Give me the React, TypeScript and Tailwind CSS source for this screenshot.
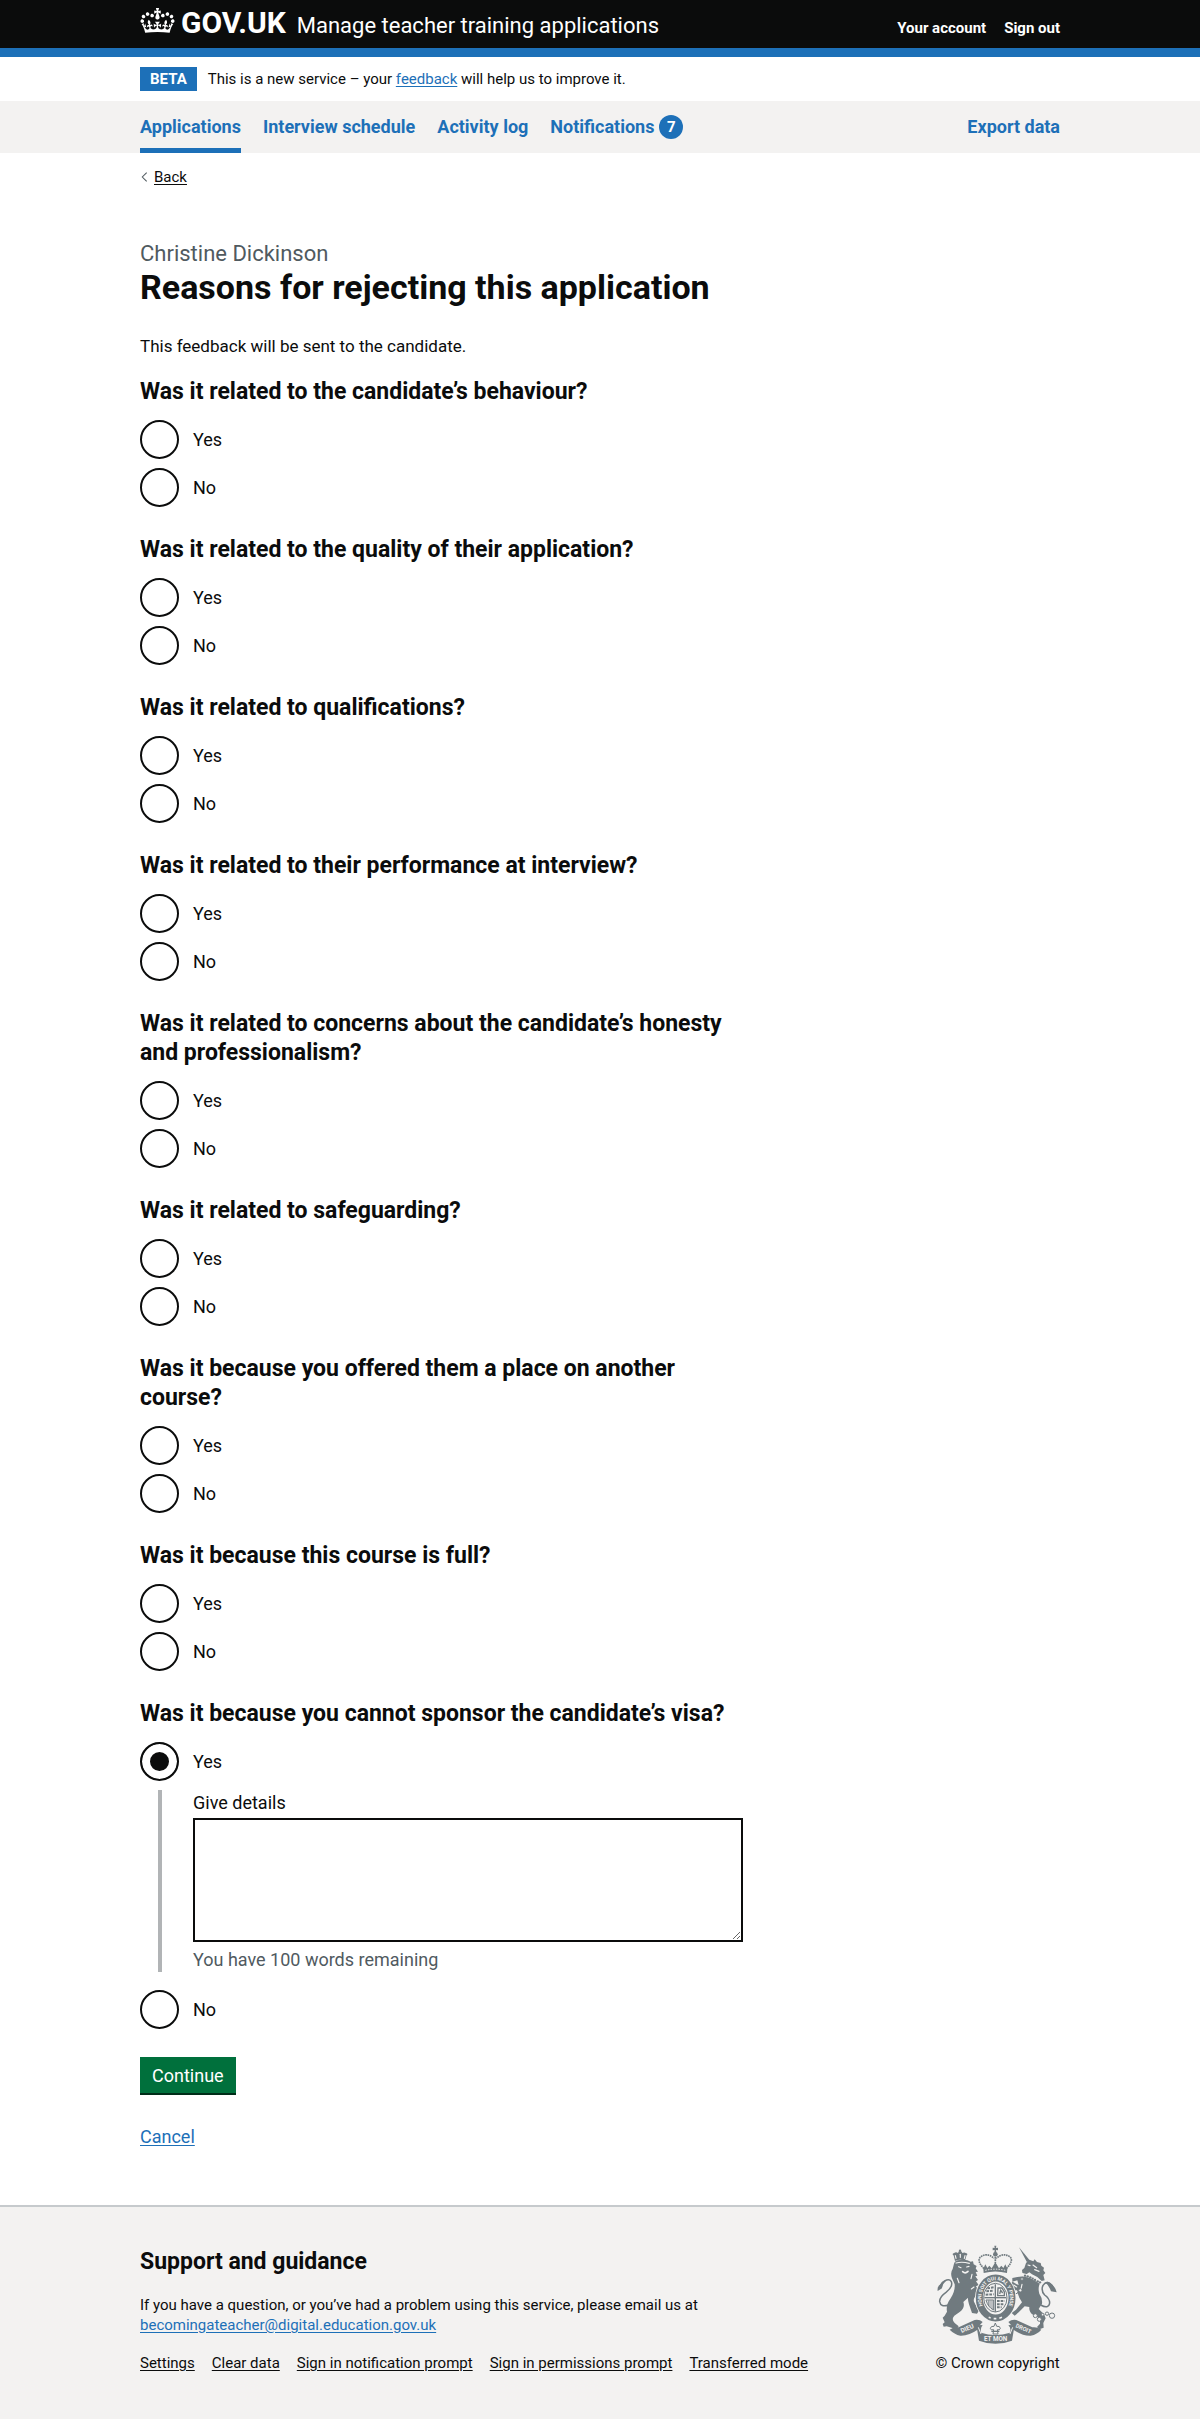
import React, { useState } from 'react';

type Answer = 'yes' | 'no' | null;

const questions: { id: string; text: string; details?: boolean; initial?: Answer }[] = [
  { id: 'behaviour', text: 'Was it related to the candidate’s behaviour?' },
  { id: 'quality', text: 'Was it related to the quality of their application?' },
  { id: 'qualifications', text: 'Was it related to qualifications?' },
  { id: 'interview', text: 'Was it related to their performance at interview?' },
  { id: 'honesty', text: 'Was it related to concerns about the candidate’s honesty and professionalism?' },
  { id: 'safeguarding', text: 'Was it related to safeguarding?' },
  { id: 'other-course', text: 'Was it because you offered them a place on another course?' },
  { id: 'full', text: 'Was it because this course is full?' },
  { id: 'visa', text: 'Was it because you cannot sponsor the candidate’s visa?', details: true, initial: 'yes' },
];

const footerLinks = ['Settings', 'Clear data', 'Sign in notification prompt', 'Sign in permissions prompt', 'Transferred mode'];

const container = 'mx-auto w-full max-w-[920px]';

function Crown() {
  return (
    <svg aria-hidden="true" viewBox="0 0 132 97" className="h-[25px] w-[35px] shrink-0">
      <path
        fill="currentColor"
        fillRule="evenodd"
        d="M25 30.2c3.5 1.5 7.7-.2 9.1-3.7 1.5-3.6-.2-7.8-3.9-9.2-3.6-1.4-7.6.3-9.1 3.9-1.4 3.5.3 7.5 3.9 9zM9 39.5c3.6 1.5 7.8-.2 9.2-3.7 1.5-3.6-.2-7.8-3.9-9.1-3.6-1.5-7.6.2-9.1 3.8-1.4 3.5.3 7.5 3.8 9zM4.4 57.2c3.5 1.5 7.7-.2 9.1-3.8 1.5-3.6-.2-7.7-3.9-9.1-3.5-1.5-7.6.3-9.1 3.8-1.4 3.5.3 7.6 3.9 9.1zm38.3-21.4c3.5 1.5 7.7-.2 9.1-3.8 1.5-3.6-.2-7.7-3.9-9.1-3.6-1.5-7.6.3-9.1 3.8-1.3 3.6.4 7.7 3.9 9.1zm64.4-5.6c-3.6 1.5-7.8-.2-9.1-3.7-1.5-3.6.2-7.8 3.8-9.2 3.6-1.4 7.7.3 9.2 3.9 1.3 3.5-.4 7.5-3.9 9zm15.9 9.3c-3.6 1.5-7.7-.2-9.1-3.7-1.5-3.6.2-7.8 3.7-9.1 3.6-1.5 7.7.2 9.2 3.8 1.5 3.5-.3 7.5-3.8 9zm4.7 17.7c-3.6 1.5-7.8-.2-9.2-3.8-1.5-3.6.2-7.7 3.9-9.1 3.6-1.5 7.7.3 9.2 3.8 1.3 3.5-.4 7.6-3.9 9.1zM89.3 35.8c-3.6 1.5-7.8-.2-9.2-3.8-1.4-3.6.2-7.7 3.9-9.1 3.6-1.5 7.7.3 9.2 3.8 1.4 3.6-.3 7.7-3.9 9.1zM69.7 17.7l8.9 4.7V9.3l-8.9 2.8c-.2-.3-.5-.6-.9-.9L72.4 0H59.6l3.5 11.2c-.3.3-.6.5-.9.9l-8.8-2.8v13.1l8.8-4.7c.3.3.6.7.9.9l-5 15.4v.1c-.2.8-.4 1.6-.4 2.4 0 4.1 3.1 7.5 7 8.1h.2c.3 0 .7.1 1 .1.4 0 .7 0 1-.1h.2c4-.6 7.1-4.1 7.1-8.1 0-.8-.1-1.7-.4-2.4V34l-5.1-15.4c.4-.2.7-.6 1-.9zM66 92.8c16.9 0 32.8 1.1 47.1 3.2 4-16.9 8.9-26.7 14-33.5l-9.6-3.4c1 4.9 1.1 7.2 0 10.2-1.5-1.4-3-4.3-4.2-8.7L108.6 76c2.8-2 5-3.2 7.5-3.3-4.4 9.4-10 11.9-13.6 11.2-4.3-.8-6.3-4.6-5.6-7.9 1-4.7 5.7-5.9 8-.5 4.3-8.7-3-11.4-7.6-8.8 7.1-7.2 7.9-13.5 2.1-21.1-8 6.1-8.1 12.3-4.5 20.8-4.7-5.4-12.1-2.5-9.5 6.2 3.4-5.2 7.9-2 7.2 3.1-.6 4.3-6.4 7.8-13.5 7.2-10.3-.9-10.9-8-11.2-13.8 2.5-.5 7.1 1.8 11 7.3L80.2 60c-4.1 4.4-8 5.3-12.3 5.4 1.4-4.4 8-11.6 8-11.6H55.5s6.4 7.2 7.9 11.6c-4.2-.1-8-1-12.3-5.4l1.4 16.4c3.9-5.5 8.5-7.7 10.9-7.3-.3 5.8-.9 12.8-11.1 13.8-7.2.6-12.9-2.9-13.5-7.2-.7-5 3.8-8.3 7.1-3.1 2.7-8.7-4.6-11.6-9.4-6.2 3.7-8.5 3.6-14.7-4.6-20.8-5.8 7.6-5 13.9 2.2 21.1-4.7-2.6-11.9.1-7.7 8.8 2.3-5.5 7.1-4.2 8.1.5.7 3.3-1.3 7.1-5.7 7.9-3.5.7-9-1.8-13.5-11.2 2.5.1 4.7 1.3 7.5 3.3l-4.7-15.4c-1.2 4.4-2.7 7.2-4.3 8.7-1.1-3-.9-5.3 0-10.2l-9.5 3.4c5 6.9 9.9 16.7 14 33.5 14.8-2.1 30.8-3.2 47.7-3.2z"
      />
    </svg>
  );
}

function RoyalArms() {
  const ink = '#707a7f';
  const paper = '#f3f2f1';
  return (
    <svg aria-hidden="true" viewBox="105 129 375 306" className="h-[102px] w-[125px]" fontFamily="Roboto, sans-serif" fontWeight="700">
      {/* Lion: crown, head and mane, body, legs, tail */}
      <g fill={ink}>
        <path d="M165 180 L160 160 Q165 150 174 156 Q175 150 180 150 Q186 150 187 156 Q197 151 200 161 L195 180 Q180 173 165 180z" />
        <circle cx="180" cy="149" r="3.5" />
        <circle cx="161" cy="160" r="3" />
        <circle cx="199" cy="160" r="3" />
        <path d="M162 188 Q164 178 180 177 Q200 174 212 182 L219 181 L221 190 L230 195 L227 202 L234 212 L227 213 L232 224 L226 226 L234 237 L228 241 L236 252 L228 256 L237 270 L228 284 Q219 292 222 302 L236 330 L231 338 L216 336 L207 310 Q203 296 204 290 L190 303 Q196 320 180 332 L163 344 Q153 354 164 366 L176 376 L170 384 L157 381 L140 376 L131 377 L128 369 L134 364 L128 350 L134 344 L141 332 Q137 312 152 292 Q166 270 164 250 L156 232 Q150 215 158 204z" />
        <path d="M232 262 L246 258 L254 264 L249 274 L236 278z" />
      </g>
      <g fill="none" stroke={paper} strokeWidth="3.5" strokeLinecap="round">
        <path d="M168 186 Q186 181 208 187" />
        <path d="M176 197 L183 200" />
        <path d="M200 198 L207 196" />
        <path d="M188 212 Q196 219 204 211" strokeWidth="5" />
        <path d="M216 220 L213 233" />
        <path d="M172 232 L177 245" />
        <path d="M222 258 L214 264" />
        <path d="M166 164 L168 172" />
        <path d="M181 160 L181 169" />
        <path d="M195 164 L193 172" />
      </g>
      <path d="M146 312 Q122 320 119 302 Q118 288 138 274 Q160 257 154 242 Q148 232 134 240 Q122 247 119 262" fill="none" stroke={ink} strokeWidth="4.5" />
      <path d="M113 270 Q111 255 122 249 Q126 240 139 238 Q127 249 126 262z" fill={ink} />

      {/* Unicorn: horn, head, body, legs, tail */}
      <g fill={ink}>
        <path d="M357 139 L389 178 L381 184z" />
        <path d="M378 186 L388 176 L400 181 L404 175 L411 183 L422 186 L424 194 L432 200 L430 208 L436 216 L430 222 L434 238 L425 240 L412 228 L396 220 L388 214 L377 221 L367 215 L366 207 L373 201z" />
        <path d="M372 226 L392 228 L420 246 Q413 262 418 278 Q428 292 426 308 L416 324 L432 340 L437 352 L430 366 L431 380 L418 385 L411 378 L420 368 L420 352 L400 342 Q386 334 388 318 L374 316 L356 334 L344 344 L335 336 L348 326 L366 304 L358 290 L350 268 L336 262 L330 250 L338 242 L350 250 L356 252 L352 238 L337 242 L337 231 L352 228z" />
      </g>
      <g fill="none" stroke={paper} strokeWidth="3.5" strokeLinecap="round">
        <path d="M384 192 L390 194" />
        <path d="M399 192 L410 200 M404 206 L417 211" />
        <path d="M372 222 L392 227 L422 244" strokeWidth="9" />
        <path d="M366 250 L362 268" />
        <path d="M341 252 L350 258" />
      </g>
      <g fill={ink}>
        {[[375, 224], [383, 226], [391, 229], [398, 233], [405, 237], [413, 241], [420, 244]].map(([x, y]) => (
          <circle key={x} cx={x} cy={y} r="3.5" />
        ))}
      </g>
      <path d="M422 312 Q446 325 449 306 Q449 292 434 282 Q422 269 429 253 Q438 240 450 248 Q459 254 461 264" fill="none" stroke={ink} strokeWidth="4.5" />
      <path d="M470 274 Q466 256 450 245 Q442 240 435 244 Q447 254 453 271z" fill={ink} />
      <g fill={paper} stroke={ink} strokeWidth="3">
        <circle cx="406" cy="344" r="6" />
        <circle cx="418" cy="355" r="6" />
        <circle cx="441" cy="338" r="5" />
        <circle cx="456" cy="344" r="8" />
        <circle cx="428" cy="341" r="4" />
        <circle cx="366" cy="234" r="4" />
        <circle cx="348" cy="272" r="6" />
        <circle cx="361" cy="268" r="5" />
      </g>

      {/* Imperial crown */}
      <g fill="none" stroke={ink} strokeWidth="5">
        <path d="M252 203 Q228 178 243 167 Q262 154 282 172" strokeDasharray="5 2" />
        <path d="M319 203 Q343 178 329 167 Q309 154 289 172" strokeDasharray="5 2" />
        <path d="M286 168 V204" strokeDasharray="5 2" />
      </g>
      <g fill={ink}>
        <circle cx="286" cy="160" r="7" />
        <path d="M283 155 L284 147 L278 148 V140 L284 141 L283 134 H289 L288 141 L294 140 V148 L288 147 L289 155z" />
        <path d="M250 203 L256 190 L262 201 L268 194 L275 202 L286 184 L297 202 L304 194 L310 201 L316 190 L322 203 L321 216 Q286 207 251 216z" />
      </g>
      <path d="M256 208 Q286 201 316 208" fill="none" stroke={paper} strokeWidth="3" strokeDasharray="4 4" />

      {/* Garter ring with its motto */}
      <ellipse cx="287" cy="291" rx="62" ry="73" fill={paper} />
      <ellipse cx="287" cy="291" rx="49" ry="60" fill="none" stroke={ink} strokeWidth="21" />
      <path id="garter-motto" d="M257 330 A43 54 0 1 1 317 330" fill="none" />
      <text fill={paper} fontSize="15" textAnchor="middle">
        <textPath href="#garter-motto" startOffset="50%">HONI SOIT QUI MAL Y PENSE</textPath>
      </text>
      <path d="M266 349 L272 351 M281 353 L289 353 M298 352 L306 349" stroke={paper} strokeWidth="5" />

      {/* Quartered shield */}
      <ellipse cx="286" cy="290" rx="35" ry="43" fill={paper} stroke={ink} strokeWidth="3" />
      <path d="M286 250 V332" stroke={ink} strokeWidth="4" />
      <path d="M253 290 H319" stroke={ink} strokeWidth="4" />
      <g stroke={ink} strokeWidth="6" fill="none">
        <path d="M262 262 L281 259 M259 271 L281 269 M257 281 L281 280" strokeDasharray="8 3" />
        <path d="M291 300 H314 M291 310 H311 M291 319 H305" strokeDasharray="8 3" />
        <path d="M294 261 H306 L313 273 V284 H293z" strokeWidth="4" />
        <path d="M299 279 L302 268 L308 276" strokeWidth="4" />
      </g>
      <path d="M258 297 H281 V327 Q264 319 258 297z" fill="none" stroke={ink} strokeWidth="3" />
      <path d="M265 298 V312 M270 298 V319 M276 298 V324" stroke={ink} strokeWidth="2.5" />

      {/* Compartment, fleur and ribbon */}
      <path d="M286 366 L290 376 Q300 374 301 382 Q299 389 292 386 L294 399 H279 L281 386 Q272 389 271 382 Q273 374 282 376z" fill={paper} stroke={ink} strokeWidth="3" />
      <path d="M274 391 H298" stroke={ink} strokeWidth="4" />
      <path d="M149 386 Q160 378 176 379 L224 357 Q238 354 248 363 L240 372 L235 385 Q207 405 181 404 Q163 400 149 386z" fill={ink} />
      <path d="M424 386 Q412 377 397 379 L349 357 Q336 354 325 363 L333 372 L338 385 Q366 405 392 404 Q412 400 424 386z" fill={ink} />
      <path d="M230 378 Q238 370 248 373 Q240 380 243 395 Q286 409 330 395 Q334 380 325 373 Q336 370 343 378 L336 419 Q286 438 237 419z" fill={ink} />
      <path d="M235 379 L243 399 M338 379 L330 399" stroke={paper} strokeWidth="3" />
      <g fill={paper} textAnchor="middle">
        <text transform="translate(204 388) rotate(-24)" fontSize="19">DIEU</text>
        <text transform="translate(368 388) rotate(24)" fontSize="17">DROIT</text>
        <text x="287" y="421" fontSize="19">ET MON</text>
      </g>
    </svg>
  );
}

function Radio({ name, value, answer, onChange, children }: { name: string; value: 'yes' | 'no'; answer: Answer; onChange: (a: Answer) => void; children: string }) {
  const id = `${name}-${value}`;
  return (
    <div className="flex h-10">
      <input
        type="radio"
        id={id}
        name={name}
        value={value}
        checked={answer === value}
        onChange={() => onChange(value)}
        className="size-[39px] shrink-0 cursor-pointer appearance-none rounded-full border-2 border-[#0b0c0c] bg-white checked:bg-[#0b0c0c] checked:shadow-[inset_0_0_0_8px_#fff]"
      />
      <label htmlFor={id} className="cursor-pointer px-[14px] leading-10">
        {children}
      </label>
    </div>
  );
}

function Question({ id, text, details, initial = null }: (typeof questions)[number]) {
  const [answer, setAnswer] = useState<Answer>(initial);
  return (
    <fieldset className="mb-[27px]">
      <legend className="mb-[14px] text-[23px] leading-[29px] font-bold">{text}</legend>
      <div className="flex flex-col gap-2">
        <Radio name={id} value="yes" answer={answer} onChange={setAnswer}>
          Yes
        </Radio>
        {details && answer === 'yes' && (
          <div className="mb-[10px] ml-[18px] border-l-4 border-[#b1b4b6] pl-[31px]">
            <label htmlFor={`${id}-details`} className="mb-[3px] block leading-[25px]">
              Give details
            </label>
            <textarea
              id={`${id}-details`}
              aria-describedby={`${id}-count`}
              className="block h-[124px] w-full resize-y border-2 border-[#0b0c0c] bg-white p-1"
            />
            <p id={`${id}-count`} className="mt-[5px] leading-[25px] text-[#505a5f]">
              You have 100 words remaining
            </p>
          </div>
        )}
        <Radio name={id} value="no" answer={answer} onChange={setAnswer}>
          No
        </Radio>
      </div>
    </fieldset>
  );
}

export default function App() {
  return (
    <div className="bg-white font-['Roboto',sans-serif] text-[18px] text-[#0b0c0c]">
      <header className="border-b-[9px] border-[#1d70b8] bg-[#0b0c0c] text-white">
        <div className={`${container} flex h-12 items-center justify-between`}>
          <div className="flex items-baseline gap-[11px]">
            <a href="#" className="flex items-baseline gap-[6px] text-[30px] leading-[46px] font-bold">
              <Crown />
              GOV.UK
            </a>
            <a href="#" className="text-[22px] leading-[46px]">
              Manage teacher training applications
            </a>
          </div>
          <nav aria-label="Account" className="flex gap-[18px] pt-2 text-[15px] leading-5 font-bold">
            <a href="#">Your account</a>
            <a href="#">Sign out</a>
          </nav>
        </div>
      </header>

      <div className={`${container} flex h-11 items-center text-[15px] leading-5`}>
        <strong className="mr-[11px] bg-[#1d70b8] px-[10px] py-[2px] text-white">BETA</strong>
        <p>
          This is a new service – your{' '}
          <a href="#" className="text-[#1d70b8] underline underline-offset-2">
            feedback
          </a>{' '}
          will help us to improve it.
        </p>
      </div>

      <nav aria-label="Primary" className="bg-[#f3f2f1] font-bold text-[#1d70b8]">
        <div className={`${container} flex h-[52px] gap-[22px] leading-[52px]`}>
          <a href="#" aria-current="page" className="shadow-[inset_0_-5px_0_#1d70b8]">
            Applications
          </a>
          <a href="#">Interview schedule</a>
          <a href="#">Activity log</a>
          <a href="#" className="flex items-center gap-[5px]">
            Notifications
            <span className="flex size-6 items-center justify-center rounded-full bg-[#1d70b8] text-[15px] leading-6 text-white">7</span>
          </a>
          <a href="#" className="ml-auto">
            Export data
          </a>
        </div>
      </nav>

      <div className={`${container} pt-[14px]`}>
        <a href="#" className="flex w-fit items-center gap-[6px] text-[15px] leading-5">
          <svg aria-hidden="true" viewBox="0 0 8 12" className="ml-px h-3 w-[7px]">
            <path d="M6.5 1L1.5 6l5 5" fill="none" stroke="#505a5f" strokeWidth="1.2" />
          </svg>
          <span className="underline underline-offset-2">Back</span>
        </a>

        <main className="max-w-[603px] pt-[53px] pb-14">
          <h1 className="mb-[27px] text-[34px] leading-10 font-bold">
            <span className="block text-[22px] leading-[27px] font-normal text-[#505a5f]">Christine Dickinson</span>
            Reasons for rejecting this application
          </h1>
          <p className="mb-[18px] text-[17px] leading-[25px]">This feedback will be sent to the candidate.</p>
          <form onSubmit={(e) => e.preventDefault()}>
            {questions.map((q) => (
              <Question key={q.id} {...q} />
            ))}
            <button type="submit" className="block h-9 cursor-pointer bg-[#00703c] px-3 text-white shadow-[0_2px_0_#002d18]">
              Continue
            </button>
            <p className="mt-[31px] leading-[25px]">
              <a href="#" className="text-[#1d70b8] underline underline-offset-2">
                Cancel
              </a>
            </p>
          </form>
        </main>
      </div>

      <footer className="border-t-2 border-[#c6cacd] bg-[#f3f2f1] pt-[37px] pb-[47px] text-[15px] leading-5">
        <div className={`${container} flex items-end justify-between`}>
          <div>
            <h2 className="mb-[19px] text-[23px] leading-[29px] font-bold">Support and guidance</h2>
            <p className="mb-[18px]">
              If you have a question, or you’ve had a problem using this service, please email us at
              <br />
              <a href="mailto:becomingateacher@digital.education.gov.uk" className="text-[#1d70b8] underline underline-offset-2">
                becomingateacher@digital.education.gov.uk
              </a>
            </p>
            <ul className="flex gap-[17px]">
              {footerLinks.map((l) => (
                <li key={l}>
                  <a href="#" className="underline underline-offset-2">
                    {l}
                  </a>
                </li>
              ))}
            </ul>
          </div>
          <a href="#" className="flex flex-col items-center gap-[7px]">
            <RoyalArms />
            © Crown copyright
          </a>
        </div>
      </footer>
    </div>
  );
}
